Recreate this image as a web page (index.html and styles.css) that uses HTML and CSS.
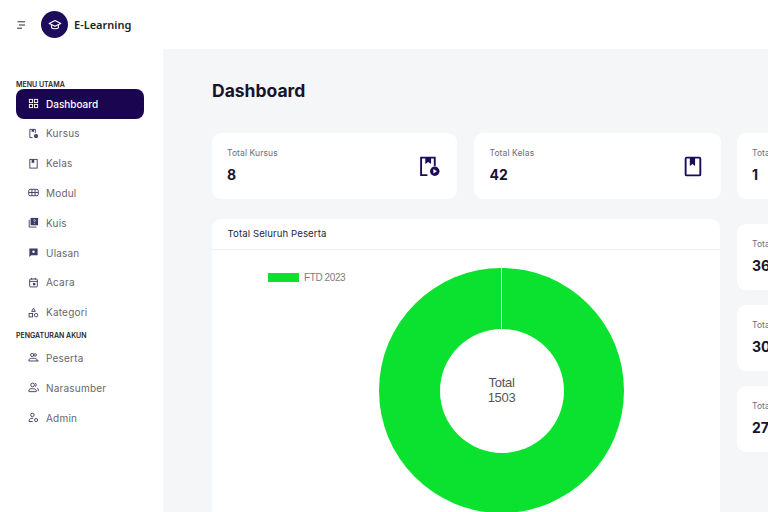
FILE: index.html
```html
<!DOCTYPE html>
<html lang="id">
<head>
<meta charset="utf-8">
<title>E-Learning Dashboard</title>
<link rel="stylesheet" href="styles.css">
</head>
<body>
<header class="topbar">
  <svg class="burger" viewBox="0 0 10 8" width="10" height="8"><path d="M1.500 .8H9M3 4H9M1 7.200h5" fill="none" stroke="#2b2b3a" stroke-width="1"/></svg>
  <div class="logo">
    <svg viewBox="0 0 14 14" width="14" height="14" fill="none" stroke="#fff" stroke-width="1.100" stroke-linejoin="round"><path d="M7 2.500 1.200 5.400 7 8.300l5.800-2.900z"/><path d="M3.600 6.800v3c1 1.200 5.800 1.200 6.800 0v-3"/></svg>
  </div>
  <span class="brand">E-Learning</span>
</header>
<div class="shell">
  <nav class="sidebar">
    <p class="nav-label">MENU UTAMA</p>
    <a class="nav-item active">
      <svg class="ico" viewBox="0 0 12 12" fill="none" stroke="currentColor"><rect x="1.500" y="1.500" width="3.500" height="3.500"/><rect x="7" y="1.500" width="3.500" height="3.500"/><rect x="1.500" y="7" width="3.500" height="3.500"/><rect x="7" y="7" width="3.500" height="3.500"/></svg>
      Dashboard</a>
    <a class="nav-item">
      <svg class="ico" viewBox="0 0 12 12" fill="none" stroke="currentColor"><path d="M5 10.500H2V1.500h6v4"/><path d="M4 1.500h2.500v3l-1.200-.8-1.300.8z" fill="currentColor" stroke="none"/><circle cx="8.700" cy="8.800" r="2.300" fill="currentColor" stroke="none"/><circle cx="8.700" cy="8.800" r=".8" fill="#fff"/></svg>
      Kursus</a>
    <a class="nav-item">
      <svg class="ico" viewBox="0 0 12 12" fill="none" stroke="currentColor"><rect x="2" y="1.500" width="8" height="9.500"/><path d="M4 1.500h2.800v4.300l-1.400-1-1.400 1z" fill="currentColor" stroke="none"/></svg>
      Kelas</a>
    <a class="nav-item">
      <svg class="ico" viewBox="0 0 12 12" fill="none" stroke="currentColor"><rect x=".8" y="2.500" width="10.400" height="7" rx="1.500"/><path d="M.8 6h10.400M4.300 2.500v7M7.700 2.500v7"/></svg>
      Modul</a>
    <a class="nav-item">
      <svg class="ico" viewBox="0 0 12 12" fill="none"><path d="M1.300 3v8h8" stroke="currentColor"/><rect x="2.800" y="1" width="8.200" height="8" fill="currentColor"/><path d="M6 3.700c.3-1 2-.8 1.900.3 0 .7-.9.700-.9 1.500M7 6.500v.8" stroke="#fff" stroke-width=".8"/></svg>
      Kuis</a>
    <a class="nav-item">
      <svg class="ico" viewBox="0 0 12 12"><path d="M1.500 1.500h9v7.500H3.500l-2 2z" fill="currentColor"/><circle cx="6" cy="5.200" r="1.300" fill="#fff"/></svg>
      Ulasan</a>
    <a class="nav-item">
      <svg class="ico" viewBox="0 0 12 12" fill="none" stroke="currentColor"><rect x="1.800" y="2.200" width="8.400" height="8.600" rx="1"/><path d="M1.800 4.800h8.400M4 1v2M8 1v2"/><rect x="5.500" y="6.500" width="2.500" height="2.500" fill="currentColor" stroke="none"/></svg>
      Acara</a>
    <a class="nav-item">
      <svg class="ico" viewBox="0 0 12 12" fill="none" stroke="currentColor"><path d="M6 1.300 8 4.800H4z"/><rect x="1.200" y="7" width="3.800" height="3.800"/><circle cx="8.800" cy="8.900" r="1.900"/></svg>
      Kategori</a>
    <p class="nav-label nav-label-second">PENGATURAN AKUN</p>
    <a class="nav-item">
      <svg class="ico" viewBox="0 0 12 12" fill="none" stroke="currentColor"><circle cx="4.500" cy="3.200" r="1.700"/><circle cx="7.800" cy="3.200" r="1.400"/><path d="M1 9.800V8.500c0-2.200 9-2.200 9 0v1.300z"/><path d="M9.500 9.800H11.500"/></svg>
      Peserta</a>
    <a class="nav-item">
      <svg class="ico" viewBox="0 0 12 12" fill="none" stroke="currentColor"><circle cx="5" cy="3.200" r="2"/><path d="M1 10.500V8.800c0-2 7-2 8 0v1.700zM7.500 1.300c1.800 0 2 3.400 0 3.800M10 6.500c1 .5 1.300 1.500 1.300 3.500"/></svg>
      Narasumber</a>
    <a class="nav-item">
      <svg class="ico" viewBox="0 0 12 12" fill="none" stroke="currentColor"><circle cx="4.800" cy="3.200" r="1.900"/><path d="M1.200 10.300V8.800c0-1.500 3-2.300 4.500-1.800M1.200 10.300h4"/><circle cx="8.800" cy="8.800" r="1.700"/></svg>
      Admin</a>
  </nav>
  <main class="content">
    <h1 class="title">Dashboard</h1>
    <section class="stats-row">
      <div class="card stat stat-a">
        <div><p class="stat-label">Total Kursus</p><p class="stat-value">8</p></div>
        <svg class="stat-ico" viewBox="0 0 20 20" fill="none" stroke="#1d0b5c" stroke-width="1.800"><path d="M8 18.200H2V1.500h13v8"/><path d="M6 1.500h5.500v6l-2.700-1.800L6 7.500z" fill="#1d0b5c" stroke="none"/><circle cx="15" cy="14.500" r="4.500" fill="#1d0b5c" stroke="none"/><path d="M13.700 12.300v4.400l3.400-2.200z" fill="#fff" stroke="none"/></svg>
      </div>
      <div class="card stat stat-b">
        <div><p class="stat-label">Total Kelas</p><p class="stat-value">42</p></div>
        <svg class="stat-ico" viewBox="0 0 20 20" fill="none" stroke="#1d0b5c" stroke-width="1.800"><rect x="2.500" y="1.500" width="14" height="17" rx="1"/><path d="M6.500 1.500h5v8l-2.500-2-2.500 2z" fill="#1d0b5c" stroke="none"/></svg>
      </div>
      <div class="card stat stat-c">
        <div><p class="stat-label">Total Modul</p><p class="stat-value">1</p></div>
      </div>
    </section>
    <section class="lower-row">
      <div class="card chart-card">
        <h2 class="chart-title">Total Seluruh Peserta</h2>
        <div class="chart-body">
          <div class="legend"><span class="swatch"></span><span class="legend-text">FTD 2023</span></div>
          <div class="donut">
            <span class="tick"></span>
            <div class="hole"><span>Total</span><span>1503</span></div>
          </div>
        </div>
      </div>
      <div class="side-stats">
        <div class="card stat stat-c"><div><p class="stat-label">Total Kuis</p><p class="stat-value">36</p></div></div>
        <div class="card stat stat-c"><div><p class="stat-label">Total Ulasan</p><p class="stat-value">30</p></div></div>
        <div class="card stat stat-c"><div><p class="stat-label">Total Acara</p><p class="stat-value">27</p></div></div>
      </div>
    </section>
  </main>
</div>
</body>
</html>
```
FILE: styles.css
```css
* { box-sizing: border-box; }
html, body { margin: 0; height: 512px; overflow: hidden; }
body { font-family: Inter, "Liberation Sans", sans-serif; background: #fff; color: #1a1633; width: 768px; }
p, h1, h2 { margin: 0; }

.topbar { height: 49px; display: flex; align-items: center; background: #fff; padding-left: 16px; }
.burger { margin-right: 15px; }
.logo { width: 27px; height: 27px; border-radius: 50%; background: #1d0b5c; display: flex; align-items: center; justify-content: center; margin-right: 6px; }
.brand { font-family: "Noto Sans", sans-serif; font-size: 11px; font-weight: 600; color: #23232f; }

.shell { display: flex; height: 463px; }
.sidebar { width: 163px; flex: none; background: #fff; padding: 32px 19px 0 16px; }
.nav-label { font-size: 7px; line-height: 8px; font-weight: 600; color: #1f1f2b; }
.nav-label-second { margin-top: 3px; margin-bottom: 4px; padding-top: 1px; }
.nav-item { display: flex; align-items: center; height: 29.800px; padding: 0 0 1px 12px; gap: 7px; font-size: 10px; letter-spacing: .2px; color: #66666f; border-radius: 8px; }
.nav-item.active { background: #1a0650; color: #fff; height: 30px; font-weight: 500; letter-spacing: 0; }
.ico { width: 11px; height: 11px; flex: none; color: #3f3a63; }
.active .ico { color: #fff; }

.content { flex: 1; min-width: 0; background: #f4f6f8; padding: 31px 0 0 49px; overflow: hidden; }
.title { font-size: 17.500px; line-height: 22px; font-weight: 700; color: #17142b; }

.stats-row { display: flex; gap: 16.500px; margin-top: 31px; }
.card { background: #fff; border-radius: 9px; flex: none; }
.stat { height: 66px; display: flex; align-items: center; justify-content: space-between; padding: 0 17px 0 15px; }
.stat-a { width: 245px; }
.stat-b { width: 247px; padding-left: 16px; }
.stat-c { width: 246px; }
.stat-label { font-size: 8.500px; line-height: 11px; color: #6d6d78; letter-spacing: .1px; }
.stat-value { font-size: 14px; line-height: 18px; font-weight: 700; color: #17142b; margin-top: 7px; }
.stat-ico { width: 21px; height: 21px; flex: none; }

.lower-row { display: flex; gap: 17px; margin-top: 20px; align-items: flex-start; }
.chart-card { width: 508px; height: 320px; }
.chart-title { font-size: 9.600px; line-height: 30px; height: 31px; font-weight: 400; color: #26263a; padding-left: 15.500px; border-bottom: 1px solid #f0f1f3; letter-spacing: .1px; }
.chart-body { display: flex; padding: 18px 0 0 56px; }
.legend { display: flex; align-items: center; gap: 5px; height: 19px; width: 77px; flex: none; white-space: nowrap; }
.swatch { width: 31px; height: 9px; background: #0ae22f; flex: none; }
.legend-text { font-family: "Liberation Sans", sans-serif; font-size: 10px; letter-spacing: -.4px; color: #7d7d7d; }
.donut { position: relative; width: 245px; height: 245px; border-radius: 50%; background: #0ae22f; margin-left: 34px; display: flex; align-items: center; justify-content: center; }
.tick { position: absolute; top: 0; left: 121.500px; width: 1.500px; height: 62px; background: #e8f8ea; }
.hole { width: 124px; height: 124px; border-radius: 50%; background: #fff; display: flex; flex-direction: column; align-items: center; justify-content: center; padding-bottom: 2px; font-family: "Liberation Sans", sans-serif; font-size: 13px; letter-spacing: -.3px; line-height: 15px; color: #555; }

.side-stats { display: flex; flex-direction: column; gap: 15px; padding-top: 5px; }
```
